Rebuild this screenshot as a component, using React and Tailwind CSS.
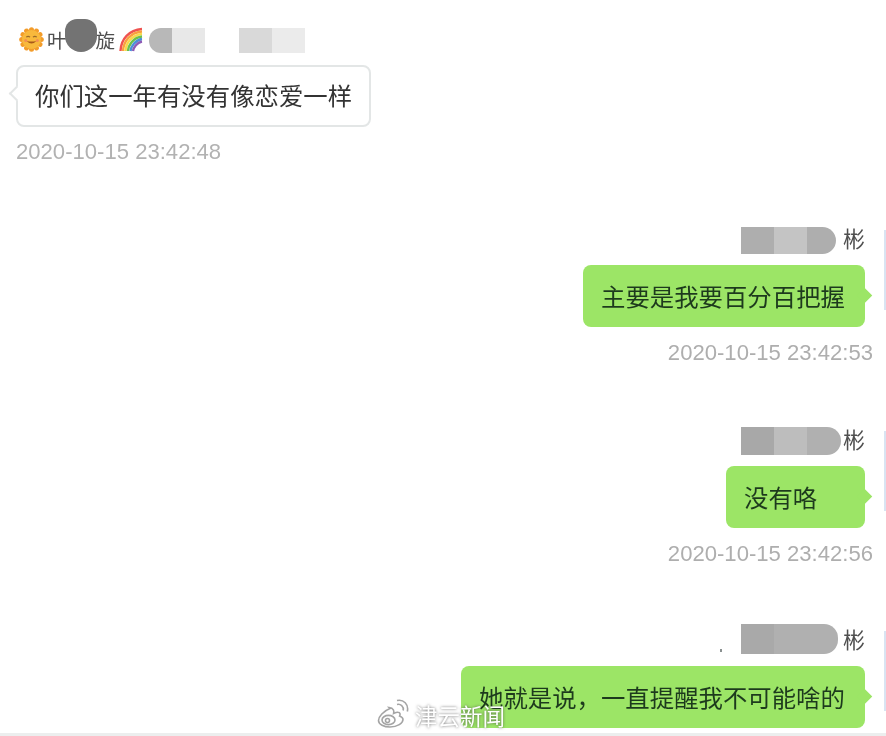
const cjk = { fontFamily: '"Noto Sans CJK SC", "Liberation Sans", sans-serif' };
const latin = { fontFamily: '"Liberation Sans", Arial, sans-serif' };

function SunFace() {
  return (
    <svg width="25" height="25" viewBox="0 0 26 26" className="shrink-0">
      <g fill="#f39c2a">
        {[0, 30, 60, 90, 120, 150, 180, 210, 240, 270, 300, 330].map((a) => (
          <circle key={a} cx="13" cy="2.8" r="2.6" transform={`rotate(${a} 13 13)`} />
        ))}
      </g>
      <circle cx="13" cy="13" r="9.8" fill="#f8b93c" />
      <path d="M7.5 10.5q2-1.6 4 0M14.5 10.5q2-1.6 4 0" fill="none" stroke="#9a6a2a" strokeWidth="1.2" />
      <path d="M8 14.5q5 5.5 10 0q-5 1.4-10 0z" fill="#a8591a" />
      <circle cx="7" cy="14" r="1.6" fill="#f28f55" />
      <circle cx="19" cy="14" r="1.6" fill="#f28f55" />
    </svg>
  );
}

function Rainbow() {
  return (
    <svg width="26" height="26" viewBox="0 0 26 26" className="shrink-0">
      <g fill="none" strokeWidth="2.4" strokeLinecap="butt">
        <path d="M2.5 24C3 12 11 3 24 2" stroke="#ef5350" />
        <path d="M5 24C5.5 14 12.5 5.5 24 4.5" stroke="#f9a03f" />
        <path d="M7.5 24C8 15.5 14 8 24 7" stroke="#f7d84a" />
        <path d="M10 24C10.5 17.5 15.5 10.5 24 9.5" stroke="#6cc04a" />
        <path d="M12.5 24C13 19.5 17 13 24 12" stroke="#4a90d9" />
        <path d="M15 24C15.5 21 18.5 15.5 24 14.5" stroke="#8e5bb5" />
      </g>
    </svg>
  );
}

function WeiboLogo() {
  return (
    <svg width="32" height="30" viewBox="0 0 32 30" className="shrink-0" fill="none">
      <g stroke="#7d7d7d" strokeOpacity="0.7" strokeWidth="1.6">
        <path d="M13 9.5C6.5 12 1.5 17.5 1.5 21.5c0 4 5.5 6.5 11.5 6.5 7.5 0 13-3.8 13-7.5 0-2.4-2.3-3-3.4-3.4.9-2 .6-3.6-1.6-3.8-1.5-.2-3.4.7-4.4 1.1.6-2.2.3-5.4-4.6-5.9z" fill="#ffffff" fillOpacity="0.85" />
        <ellipse cx="11.5" cy="21" rx="6.5" ry="4.6" />
        <circle cx="10.5" cy="21.5" r="2" />
        <path d="M20 5.5c3.5-1 7 2 6.2 6" />
        <path d="M20 1.5c6.5-1.5 12 4 10.3 11" />
      </g>
    </svg>
  );
}

function Tail({ color }) {
  return <div className={`absolute right-[-5px] top-[25px] w-[11px] h-[11px] rotate-45 ${color}`} />;
}

function Redacted({ size, shades }) {
  return (
    <div className={`flex overflow-hidden rounded-r-[14px] ${size}`}>
      {shades.map((s, i) => (
        <div key={i} className={`h-full ${s}`} />
      ))}
    </div>
  );
}

function SentMessage({ nameBlock, text, bubbleWidth, time, dot }) {
  return (
    <div className="flex justify-end">
      <div className="flex flex-col items-end">
        <div className="flex items-end justify-between w-[124px] h-[28px] relative">
          {dot && <div className="absolute left-[-21px] top-[22px] w-[2px] h-[3px] bg-[#8a9090]" />}
          {nameBlock}
          <span className="text-[22px] leading-[28px] text-[#4f4f4f] w-[22px] self-start -mt-[3px]" style={cjk}>彬</span>
        </div>
        <div className={`relative mt-[11px] h-[62px] rounded-[8px] bg-[#9ce566] flex items-center pl-[18px] ${bubbleWidth}`}>
          <Tail color="bg-[#9ce566]" />
          <span className="relative text-[24.4px] leading-none text-[#1d3a1d] whitespace-nowrap" style={cjk}>{text}</span>
        </div>
        {time && (
          <div className="mt-[12px] -mr-[8px] text-[22.1px] leading-[28px] text-[#aeaeae]" style={latin}>{time}</div>
        )}
      </div>
      <div className="ml-[19px] mt-[4px] w-[2px] h-[80px] bg-[#d9e4f2]" />
    </div>
  );
}

export default function App() {
  return (
    <div className="relative w-[886px] h-[736px] overflow-hidden bg-white blur-[0.6px]">
      <div className="pl-[16px] pt-[26px]">
        <div className="flex items-center h-[27px] pl-[3px]">
          <SunFace />
          <div className="relative flex items-center ml-[3px] w-[68px] text-[19.5px] leading-none text-[#4f4f4f] justify-between mr-[3px]" style={cjk}>
            <span>叶</span>
            <span>旋</span>
            <div className="absolute left-[18px] top-[-11px] w-[32px] h-[33px] rounded-b-[16px] rounded-t-[12px] bg-[#737373]" />
          </div>
          <Rainbow />
          <div className="flex h-[25px] ml-[5px] mt-[2px]">
            <div className="w-[23px] rounded-l-[12px] bg-[#b8b8b8]" />
            <div className="w-[33px] bg-[#e8e8e8]" />
            <div className="w-[34px]" />
            <div className="w-[33px] bg-[#d9d9d9]" />
            <div className="w-[33px] bg-[#ebebeb]" />
          </div>
        </div>
        <div className="relative mt-[12px] w-[355px] h-[62px] rounded-[8px] border-2 border-[#e3e6e6] bg-white flex items-center pl-[17px] pb-[2px]">
          <div className="absolute left-[-7px] top-[21px] w-[11px] h-[11px] rotate-45 bg-white border-l-2 border-b-2 border-[#e3e6e6]" />
          <span className="relative text-[24.4px] leading-none text-[#333333] whitespace-nowrap" style={cjk}>你们这一年有没有像恋爱一样</span>
        </div>
        <div className="mt-[11px] text-[22.1px] leading-[28px] text-[#b2b2b2]" style={latin}>2020-10-15 23:42:48</div>
      </div>

      <div className="mt-[60px] flex flex-col">
        <SentMessage
          nameBlock={<Redacted size="w-[95px] h-[27px]" shades={['w-[33px] bg-[#aeaeae]', 'w-[33px] bg-[#c4c4c4]', 'w-[29px] bg-[#aeaeae]']} />}
          text="主要是我要百分百把握"
          bubbleWidth="w-[282px]"
          time="2020-10-15 23:42:53"
        />
        <div className="h-[60px]" />
        <SentMessage
          nameBlock={<Redacted size="w-[100px] h-[28px]" shades={['w-[33px] bg-[#a8a8a8]', 'w-[33px] bg-[#bdbdbd]', 'w-[34px] bg-[#b0b0b0]']} />}
          text="没有咯"
          bubbleWidth="w-[139px]"
          time="2020-10-15 23:42:56"
        />
        <div className="h-[59px]" />
        <SentMessage
          nameBlock={<Redacted size="w-[97px] h-[30px] mb-[1px]" shades={['w-[33px] bg-[#a9a9a9]', 'w-[64px] bg-[#b0b0b0]']} />}
          text="她就是说，一直提醒我不可能啥的"
          bubbleWidth="w-[404px]"
          dot
        />
      </div>

      <div className="absolute left-0 right-0 bottom-0 h-[3px] bg-[#eceeee]" />

      <div className="absolute left-[377px] top-[699px] flex items-center">
        <WeiboLogo />
        <span
          className="ml-[6px] mt-[2px] text-[22.5px] leading-none text-white whitespace-nowrap [text-shadow:0_0_3px_rgba(60,60,60,0.75)]"
          style={cjk}
        >
          津云新闻
        </span>
      </div>
    </div>
  );
}
